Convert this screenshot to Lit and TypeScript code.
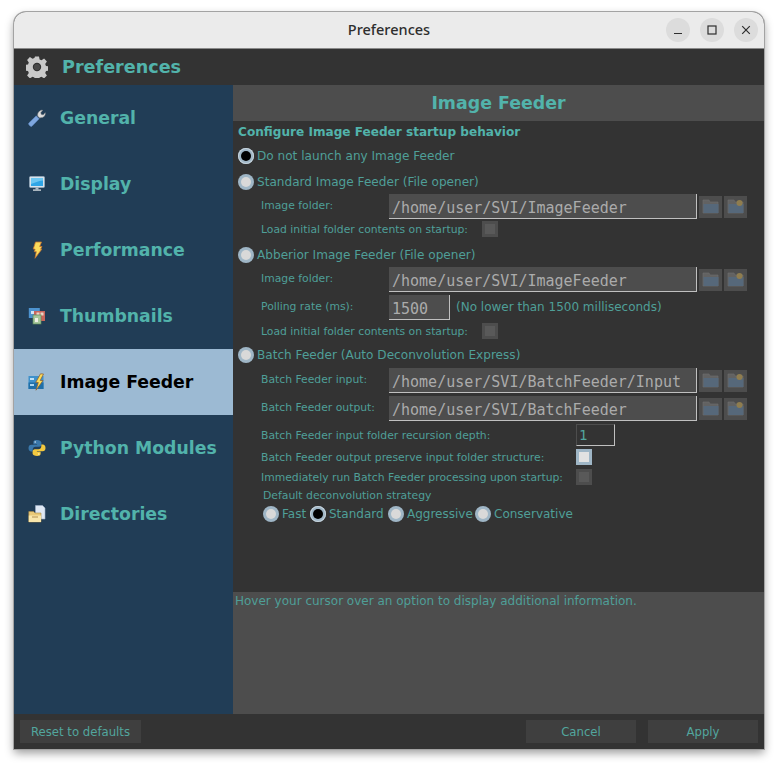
import { LitElement, html, css, svg } from "lit";
import { customElement } from "lit/decorators.js";

const icons: Record<string, unknown> = {
  wrench: svg`<svg width="18" height="18" viewBox="0 0 18 18"><path d="M.8 14 8.200 6.800l3 3L4 17.200c-1.200 1.100-4.200-1.800-3.200-3.200z" fill="#7ea6de" stroke="#5d86bd" stroke-width=".6"/><path d="M9.800 7.200c-.6-2.800.9-5.400 3.800-6l1.100.1-2 2.400.6 1.700 1.900.5 2-2.200c.5 2.700-1.600 5.100-4.300 4.900l-1 .3z" fill="#dcdcdc" stroke="#8c8c8c" stroke-width=".5"/></svg>`,
  monitor: svg`<svg width="18" height="18" viewBox="0 0 18 18"><rect x="1.500" y="1.500" width="15" height="11" rx="1" fill="#d8e3ec" stroke="#9eb2c2" stroke-width=".6"/><rect x="3" y="3" width="12" height="8" fill="#2fa5e6"/><path d="M3 3h12v2.500C10 6 7 8 3 9z" fill="#6cc7f2"/><rect x="7.500" y="12.500" width="3" height="2" fill="#aebcc6"/><rect x="5" y="14.500" width="8" height="1.200" fill="#e4e8ec"/></svg>`,
  bolt: svg`<svg width="18" height="18" viewBox="0 0 18 18"><path d="M7.500 1h6L11.700 5.500h2.300l-1.400 2.700h1.200L7 17.300l1.300-6.600H6.300l.8-2.600H5.200z" fill="#fbdc5b" stroke="#c7742e" stroke-width=".8"/></svg>`,
  thumbs: svg`<svg width="18" height="18" viewBox="0 0 18 18"><rect x=".8" y="1" width="11" height="10" fill="#4d93cf"/><rect x="6" y="4" width="11" height="10" fill="#c9665c"/><rect x="8.500" y="5.500" width="3" height="3" fill="#e9d7c7"/><rect x="12.500" y="5.500" width="3" height="3" fill="#e9d7c7"/><rect x="3" y="4" width="3" height="3" fill="#cfe3f2"/><rect x="5" y="8" width="8" height="9" fill="#a7c79a" stroke="#5d8c5b" stroke-width=".7"/><rect x="7" y="11" width="3" height="4" fill="#f0f0e6"/></svg>`,
  feeder: svg`<svg width="18" height="18" viewBox="0 0 18 18"><rect x=".5" y="3" width="15" height="13" fill="#3f91cb"/><path d="M.5 9.500h15V16H.5z" fill="#1f6fa8"/><rect x="2" y="5" width="4" height="2" fill="#bfe2f6"/><rect x="2" y="11" width="4" height="2" fill="#a9d4ee"/><path d="M12.500 .8 7.700 9.500h2.600L8 17.200 15 7.500h-2.800L15.500 1z" fill="#fbdc5b" stroke="#8a5a2c" stroke-width=".7"/></svg>`,
  python: svg`<svg width="18" height="18" viewBox="0 0 18 18"><path d="M8.800 1C5.600 1 5.400 2.400 5.400 3.400V5.200h3.700v.6H3.300C1.700 5.800.5 7 .5 9.100s1.100 3.400 2.700 3.400h1.500v-2c0-1.500 1.200-2.700 2.800-2.700h3.600c1.300 0 2.300-1 2.300-2.300V3.400C13 2 11.500 1 8.800 1z" fill="#3a78ab"/><path d="M9.200 17c3.200 0 3.400-1.400 3.400-2.400v-1.800H8.900v-.6h5.800c1.600 0 2.800-1.200 2.800-3.300s-1.100-3.400-2.700-3.400h-1.500v2c0 1.500-1.200 2.700-2.800 2.700H6.900c-1.300 0-2.300 1-2.300 2.300v2.100C4.600 16 6.500 17 9.200 17z" fill="#f3c93f"/><circle cx="7.200" cy="3" r=".8" fill="#d5e4ef"/><circle cx="10.800" cy="15" r=".8" fill="#fff4c4"/></svg>`,
  dirs: svg`<svg width="18" height="18" viewBox="0 0 18 18"><path d="M7.500.5h7l2.500 2.500v11H7.500z" fill="#dfe8f4" stroke="#9fb0c8" stroke-width=".6"/><path d="M.8 6.500h4.700L7 8h6v9H.8z" fill="#e9c978" stroke="#a88a48" stroke-width=".6"/><path d="M.8 10.500h12.200V17H.8z" fill="#f8e6ab"/><rect x="4" y="11.500" width="6" height="1" fill="#b4904e"/></svg>`,
};

const gear = svg`<svg width="22" height="22" viewBox="0 0 22 22"><path fill="#c9c9c9" fill-rule="evenodd" d="M9 .5h4l.6 3 1.900.8 2.600-1.700 2.800 2.800-1.700 2.600.8 1.900 3 .6v4l-3 .6-.8 1.900 1.700 2.600-2.800 2.800-2.600-1.700-1.900.8-.6 3H9l-.6-3-1.900-.8-2.600 1.700-2.800-2.800 1.700-2.600-.8-1.900-3-.6V9l3-.6.8-1.900L1.100 3.900 3.900 1.100l2.600 1.700 1.900-.8zM11 6.800a4.200 4.200 0 1 0 0 8.400 4.200 4.200 0 0 0 0-8.400z"/><circle cx="11" cy="11" r="3.100" fill="#4a4a4a"/></svg>`;

const folder = svg`<svg width="17" height="15" viewBox="0 0 17 15"><path d="M1 1h6l1 2h8v11H1z" fill="#626262" stroke="#6e6e6e" stroke-width=".6"/><rect x="1.500" y="5" width="15" height="9" fill="#56687a"/></svg>`;
const folderNew = svg`<svg width="17" height="15" viewBox="0 0 17 15"><path d="M1 1h6l1 2h8v11H1z" fill="#626262" stroke="#6e6e6e" stroke-width=".6"/><rect x="1.500" y="5" width="15" height="9" fill="#56687a"/><circle cx="12.500" cy="4" r="3" fill="#8f7d4f"/></svg>`;

const nav = [
  ["General", "wrench"],
  ["Display", "monitor"],
  ["Performance", "bolt"],
  ["Thumbnails", "thumbs"],
  ["Image Feeder", "feeder"],
  ["Python Modules", "python"],
  ["Directories", "dirs"],
];

@customElement("app-root")
export class AppRoot extends LitElement {
  static styles = css`
    :host { display: block; width: 778px; height: 766px; background: #fff; font-family: "DejaVu Sans", sans-serif; color: #4f9f98; overflow: hidden; }
    .page { padding: 12px 14px 0; box-sizing: border-box; height: 766px; }
    .win { width: 750px; height: 737px; display: flex; flex-direction: column; border-radius: 12px 12px 0 0; box-shadow: 0 0 0 1px #a3a3a3, 0 4px 10px rgba(0,0,0,.4); background: #333; overflow: hidden; }
    .title { height: 36px; flex: none; display: flex; align-items: center; background: #ebebeb; border-bottom: 1px solid #8a8a8a; position: relative; justify-content: flex-end; padding-right: 6px; gap: 10px; }
    .title span { position: absolute; left: 0; right: 0; top: 7px; text-align: center; font: 500 14.500px "Noto Sans", sans-serif; color: #2e2e2e; }
    .wb { width: 24px; height: 24px; border-radius: 50%; background: #dcdcdc; display: flex; align-items: center; justify-content: center; position: relative; }
    .head { height: 36px; flex: none; display: flex; align-items: center; padding-left: 12px; gap: 14px; background: #333; }
    .head svg { display: block; }
    .head b { font-size: 17.600px; font-weight: 700; color: #52b3ab; padding-bottom: 1px; }
    .mid { flex: 1; display: flex; min-height: 0; }
    .side { width: 219px; flex: none; background: #213d56; }
    .item { height: 66px; display: flex; align-items: center; padding-left: 14px; gap: 14px; font-size: 17.300px; font-weight: 700; color: #52b3ab; }
    .item svg { display: block; flex: none; }
    .item.on { background: #9cbad3; color: #000; }
    .main { flex: 1; display: flex; flex-direction: column; min-width: 0; }
    .ph { height: 36px; flex: none; display: flex; align-items: center; justify-content: center; background: #4d4d4d; font-size: 17.400px; font-weight: 700; color: #52b3ab; }
    .form { flex: 1; padding-left: 5px; font-size: 12.100px; display: flex; flex-direction: column; }
    .row { display: flex; align-items: center; flex: none; }
    .cfg { height: 20px; font-size: 12.100px; font-weight: 700; color: #52b3ab; padding-top: 1px; box-sizing: border-box; }
    .opt { height: 20px; gap: 3px; }
    .opt span { padding-bottom: 1px; }
    .m5 { margin-top: 5px; } .m6 { margin-top: 6px; } .m4 { margin-top: 4px; } .m3 { margin-top: 3px; } .m2 { margin-top: 2px; } .m1 { margin-top: 1px; }
    .radio { width: 16px; height: 16px; border-radius: 50%; background: #9fb6c6; display: flex; align-items: center; justify-content: center; flex: none; }
    .radio i { width: 10px; height: 10px; border-radius: 50%; background: #d9d9d9; }
    .radio.on { box-shadow: inset 0 0 0 1px #c6d3dc; }
    .radio.on i { background: #000; }
    .sub { padding-left: 23px; font-size: 10.800px; }
    .lab { width: 128px; flex: none; padding-bottom: 3px; }
    .h25 { height: 25px; }
    .h20 { height: 20px; }
    .h22 { height: 22px; }
    .h18 { height: 18px; }
    .input { box-sizing: border-box; height: 25px; width: 308px; background: #4d4d4d; border-right: 1px solid #c0c0c0; border-bottom: 1px solid #c0c0c0; font: 15px "DejaVu Sans Mono", monospace; color: #ababab; display: flex; align-items: center; padding: 3px 0 0 3px; flex: none; }
    .fb { width: 23px; height: 22px; background: #4d4d4d; display: flex; align-items: center; justify-content: center; margin-left: 2px; }
    .fb svg { display: block; }
    .poll { width: 61px; }
    .note { margin-left: 6px; font-size: 12px; padding-bottom: 2px; }
    .check { width: 16px; height: 16px; background: #4d4d4d; display: flex; align-items: center; justify-content: center; flex: none; }
    .check i { width: 10px; height: 10px; background: #595959; }
    .check.lit { background: #9fb6c6; }
    .check.lit i { background: #e2e2e2; }
    .w221 { width: 221px; flex: none; }
    .w315 { width: 315px; flex: none; }
    .spin { box-sizing: border-box; width: 39px; height: 22px; border: 1px solid #4d4d4d; border-right-color: #c0c0c0; border-bottom-color: #c0c0c0; font: 14px "DejaVu Sans Mono", monospace; padding-left: 2px; display: flex; align-items: center; color: #52a69e; }
    .def { padding-left: 25px; font-size: 10.850px; }
    .strat { height: 20px; padding-left: 25px; font-size: 12px; }
    .strat .radio { margin-right: 3px; }
    .strat span { margin-right: 3px; padding-bottom: 1px; }
    .s1 { width: 25px; } .s2 { width: 56px; } .s3 { width: 65px; }
    .hint { height: 122px; flex: none; background: #4d4d4d; padding: 2px 0 0 2px; box-sizing: border-box; font-size: 12px; }
    .foot { height: 35px; flex: none; display: flex; align-items: center; padding: 0 6px; background: #333; }
    .btn { height: 23px; box-sizing: border-box; background: #3f3f3f; display: flex; align-items: center; justify-content: center; font-size: 13px; font-stretch: condensed; font-family: "DejaVu Sans Condensed", "DejaVu Sans", sans-serif; color: #52a69e; }
    .b1 { width: 121px; margin-right: auto; }
    .b2 { width: 110px; margin-right: 12px; }
    .b3 { width: 110px; }
  `;

  radio(on = false) {
    return html`<div class="radio ${on ? "on" : ""}"><i></i></div>`;
  }
  folderRow(label: string, value: string, cls: string) {
    return html`<div class="row sub h25 ${cls}"><div class="lab">${label}</div><div class="input">${value}</div><div class="fb">${folder}</div><div class="fb">${folderNew}</div></div>`;
  }
  checkRow(label: string, w: string, cls: string, lit = false) {
    return html`<div class="row sub ${cls}"><div class="${w}">${label}</div><div class="check ${lit ? "lit" : ""}"><i></i></div></div>`;
  }

  render() {
    return html`<div class="page"><div class="win">
      <div class="title"><span>Preferences</span>
        <div class="wb"><svg width="10" height="10" viewBox="0 0 10 10"><path d="M1 8.500h8" stroke="#2e2e2e" stroke-width="1.200"/></svg></div>
        <div class="wb"><svg width="10" height="10" viewBox="0 0 10 10"><rect x="1" y="1" width="8" height="8" fill="none" stroke="#2e2e2e" stroke-width="1.200"/></svg></div>
        <div class="wb"><svg width="10" height="10" viewBox="0 0 10 10"><path d="M1.200 1.200l7.600 7.600M8.800 1.200l-7.600 7.600" stroke="#2e2e2e" stroke-width="1.200"/></svg></div>
      </div>
      <div class="head">${gear}<b>Preferences</b></div>
      <div class="mid">
        <div class="side">
          ${nav.map(([n, i]) => html`<div class="item ${n === "Image Feeder" ? "on" : ""}">${icons[i]}<span>${n}</span></div>`)}
        </div>
        <div class="main">
          <div class="ph">Image Feeder</div>
          <div class="form">
            <div class="row cfg">Configure Image Feeder startup behavior</div>
            <div class="row opt m5">${this.radio(true)}<span>Do not launch any Image Feeder</span></div>
            <div class="row opt m6">${this.radio()}<span>Standard Image Feeder (File opener)</span></div>
            ${this.folderRow("Image folder:", "/home/user/SVI/ImageFeeder", "m2")}
            ${this.checkRow("Load initial folder contents on startup:", "w221", "h20")}
            <div class="row opt m6">${this.radio()}<span>Abberior Image Feeder (File opener)</span></div>
            ${this.folderRow("Image folder:", "/home/user/SVI/ImageFeeder", "m2")}
            <div class="row sub h25 m3"><div class="lab">Polling rate (ms):</div><div class="input poll">1500</div><div class="note">(No lower than 1500 milliseconds)</div></div>
            ${this.checkRow("Load initial folder contents on startup:", "w221", "h20 m1")}
            <div class="row opt m4">${this.radio()}<span>Batch Feeder (Auto Deconvolution Express)</span></div>
            ${this.folderRow("Batch Feeder input:", "/home/user/SVI/BatchFeeder/Input", "m3")}
            ${this.folderRow("Batch Feeder output:", "/home/user/SVI/BatchFeeder", "m3")}
            <div class="row sub h22 m3"><div class="w315">Batch Feeder input folder recursion depth:</div><div class="spin">1</div></div>
            ${this.checkRow("Batch Feeder output preserve input folder structure:", "w315", "h20 m1", true)}
            ${this.checkRow("Immediately run Batch Feeder processing upon startup:", "w315", "h18 m1")}
            <div class="row def h18">Default deconvolution strategy</div>
            <div class="row strat">
              ${this.radio()}<span class="s1">Fast</span>
              ${this.radio(true)}<span class="s2">Standard</span>
              ${this.radio()}<span class="s3">Aggressive</span>
              ${this.radio()}<span>Conservative</span>
            </div>
          </div>
          <div class="hint">Hover your cursor over an option to display additional information.</div>
        </div>
      </div>
      <div class="foot"><div class="btn b1">Reset to defaults</div><div class="btn b2">Cancel</div><div class="btn b3">Apply</div></div>
    </div></div>`;
  }
}
